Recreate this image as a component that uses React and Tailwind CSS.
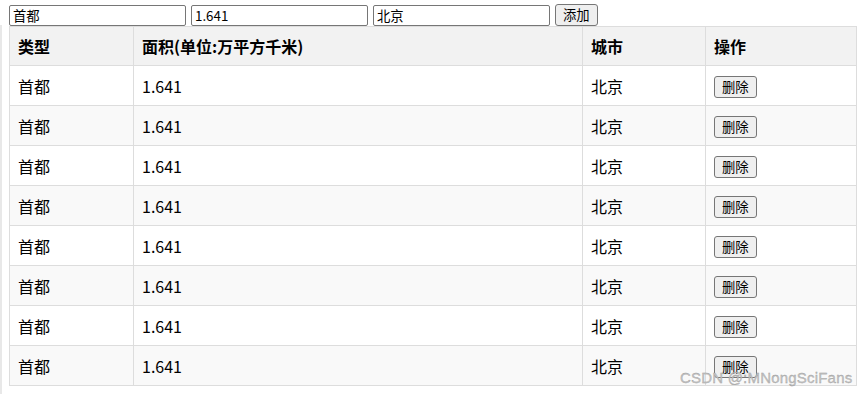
import { useState } from 'react';

const font = { fontFamily: '"Microsoft YaHei", "Noto Sans CJK SC", "Noto Sans", sans-serif' };

export default function App() {
    const [rows] = useState(
        Array.from({ length: 8 }, (_, i) => ({ id: i, type: '首都', area: '1.641', city: '北京' }))
    );

    const inputCls =
        'w-[177px] h-[21px] border border-[#767676] rounded-[2px] px-[3px] text-[13.33px] text-black bg-white outline-none';
    const btnCls =
        'h-[22px] px-[7px] border border-[#767676] rounded-[3px] bg-[#efefef] text-[13.33px] text-black leading-none';

    return (
        <div className="relative w-[862px] h-[394px] bg-white overflow-hidden" style={font}>
            {/* left strip */}
            <div className="absolute left-0 top-[25px] bottom-0 w-[2px] bg-[#e8e8e8]" />

            {/* form */}
            <div className="flex items-center gap-[5px] pl-[9px] pt-[4px]">
                <input className={inputCls} defaultValue="首都" style={font} />
                <input className={inputCls} defaultValue="1.641" style={font} />
                <input className={inputCls} defaultValue="北京" style={font} />
                <button className={`${btnCls} h-[21px]`} style={font}>添加</button>
            </div>

            {/* table */}
            <div className="pl-[9px]">
                <table className="w-[848px] border-collapse text-[16px] text-black">
                    <thead>
                        <tr className="bg-[#f2f2f2]">
                            <th className="w-[124px] h-[39px] border border-[#dddddd] px-2 text-left font-bold">类型</th>
                            <th className="w-[449px] h-[39px] border border-[#dddddd] px-2 text-left font-bold">面积(单位:万平方千米)</th>
                            <th className="w-[123px] h-[39px] border border-[#dddddd] px-2 text-left font-bold">城市</th>
                            <th className="h-[39px] border border-[#dddddd] px-2 text-left font-bold">操作</th>
                        </tr>
                    </thead>
                    <tbody>
                        {rows.map((r, i) => (
                            <tr key={r.id} className={i % 2 === 1 ? 'bg-[#f9f9f9]' : 'bg-white'}>
                                <td className="h-[40px] border border-[#dddddd] px-2">{r.type}</td>
                                <td className="h-[40px] border border-[#dddddd] px-2">{r.area}</td>
                                <td className="h-[40px] border border-[#dddddd] px-2">{r.city}</td>
                                <td className="h-[40px] border border-[#dddddd] px-2 pt-[7px] align-top">
                                    <button className={btnCls} style={font}>删除</button>
                                </td>
                            </tr>
                        ))}
                    </tbody>
                </table>
            </div>

            {/* watermark */}
            <div
                className="absolute left-[680px] top-[367px] text-[15px] text-[#c4c4c4] tracking-[0.2px] whitespace-nowrap"
                style={{ fontFamily: '"Liberation Sans", Arial, sans-serif', WebkitTextStroke: '0.3px #9a9a9a' }}
            >
                CSDN @:MNongSciFans
            </div>
        </div>
    );
}
